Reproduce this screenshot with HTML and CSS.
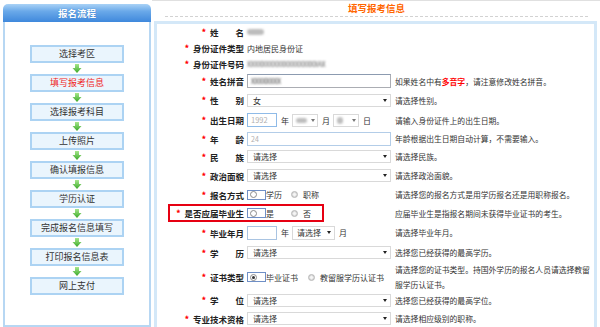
FILE: index.html
```html
<!DOCTYPE html>
<html lang="zh-CN">
<head>
<meta charset="utf-8">
<title>填写报考信息</title>
<link rel="stylesheet" href="styles.css">
</head>
<body>
<div class="page">
  <aside class="side">
    <div class="side-head">报名流程</div>
    <div class="side-body">
      <div class="step">选择考区</div>
      <svg class="arrow" viewBox="0 0 10 11"><defs><linearGradient id="g" x1="0" y1="0" x2="0" y2="1"><stop offset="0" stop-color="#a8e78c"/><stop offset="1" stop-color="#38a828"/></linearGradient></defs><path d="M3 1h4v4h2.5L5 10 0.5 5H3z" fill="url(#g)"/></svg>
      <div class="step cur">填写报考信息</div>
      <svg class="arrow" viewBox="0 0 10 11"><path d="M3 1h4v4h2.5L5 10 0.5 5H3z" fill="url(#g)"/></svg>
      <div class="step">选择报考科目</div>
      <svg class="arrow" viewBox="0 0 10 11"><path d="M3 1h4v4h2.5L5 10 0.5 5H3z" fill="url(#g)"/></svg>
      <div class="step">上传照片</div>
      <svg class="arrow" viewBox="0 0 10 11"><path d="M3 1h4v4h2.5L5 10 0.5 5H3z" fill="url(#g)"/></svg>
      <div class="step">确认填报信息</div>
      <svg class="arrow" viewBox="0 0 10 11"><path d="M3 1h4v4h2.5L5 10 0.5 5H3z" fill="url(#g)"/></svg>
      <div class="step">学历认证</div>
      <svg class="arrow" viewBox="0 0 10 11"><path d="M3 1h4v4h2.5L5 10 0.5 5H3z" fill="url(#g)"/></svg>
      <div class="step">完成报名信息填写</div>
      <svg class="arrow" viewBox="0 0 10 11"><path d="M3 1h4v4h2.5L5 10 0.5 5H3z" fill="url(#g)"/></svg>
      <div class="step">打印报名信息表</div>
      <svg class="arrow" viewBox="0 0 10 11"><path d="M3 1h4v4h2.5L5 10 0.5 5H3z" fill="url(#g)"/></svg>
      <div class="step">网上支付</div>
    </div>
  </aside>

  <main class="main">
    <h1 class="title">填写报考信息</h1>
    <div class="panel">
      <div class="row s16">
        <div class="lab"><b>*</b>姓　　名</div>
        <div class="val"><span class="blob"></span></div>
        <div class="hint"></div>
      </div>
      <div class="row s16">
        <div class="lab"><b>*</b>身份证件类型</div>
        <div class="val">内地居民身份证</div>
        <div class="hint"></div>
      </div>
      <div class="row s16">
        <div class="lab"><b>*</b>身份证件号码</div>
        <div class="val"><span class="masked">XXXXXXXXXXXXXXXXXXXAX</span></div>
        <div class="hint"></div>
      </div>
      <div class="row s18">
        <div class="lab"><b>*</b>姓名拼音</div>
        <div class="val"><span class="inp"><span class="masked dark">XXXXXXXX</span></span></div>
        <div class="hint">如果姓名中有<em>多音字</em>，请注意修改姓名拼音。</div>
      </div>
      <div class="row s20">
        <div class="lab"><b>*</b>性　　别</div>
        <div class="val"><span class="sel">女<i class="caret"></i></span></div>
        <div class="hint">请选择性别。</div>
      </div>
      <div class="row s20">
        <div class="lab"><b>*</b>出生日期</div>
        <div class="val">
          <span class="inp short focus">1992</span><span class="unit">年</span>
          <span class="sel mini"><span class="blob sm"></span><i class="caret"></i></span><span class="unit">月</span>
          <span class="sel mini"><span class="blob xs"></span><i class="caret"></i></span><span class="unit">日</span>
        </div>
        <div class="hint">请输入身份证件上的出生日期。</div>
      </div>
      <div class="row s17">
        <div class="lab"><b>*</b>年　　龄</div>
        <div class="val"><span class="inp off">24</span></div>
        <div class="hint">年龄根据出生日期自动计算，不需要输入。</div>
      </div>
      <div class="row">
        <div class="lab"><b>*</b>民　　族</div>
        <div class="val"><span class="sel">请选择<i class="caret"></i></span></div>
        <div class="hint">请选择民族。</div>
      </div>
      <div class="row">
        <div class="lab"><b>*</b>政治面貌</div>
        <div class="val"><span class="sel">请选择<i class="caret"></i></span></div>
        <div class="hint">请选择政治面貌。</div>
      </div>
      <div class="row">
        <div class="lab"><b>*</b>报名方式</div>
        <div class="val">
          <span class="opt"><span class="rbox"><span class="rad"></span></span>学历</span>
          <span class="rad dim"></span><span class="olab">职称</span>
        </div>
        <div class="hint">请选择您的报名方式是用学历报名还是用职称报名。</div>
      </div>
      <div class="row s18 flag">
        <div class="lab"><b>*</b>是否应届毕业生</div>
        <div class="val">
          <span class="opt"><span class="rbox"><span class="rad"></span></span>是</span>
          <span class="rad dim"></span><span class="olab">否</span>
        </div>
        <div class="hint">应届毕业生是指报名期间未获得毕业证书的考生。</div>
      </div>
      <div class="row s21">
        <div class="lab"><b>*</b>毕业年月</div>
        <div class="val">
          <span class="inp short plain"></span><span class="unit">年</span>
          <span class="sel small">请选择<i class="caret"></i></span><span class="unit">月</span>
        </div>
        <div class="hint">请选择毕业年月。</div>
      </div>
      <div class="row">
        <div class="lab"><b>*</b>学　　历</div>
        <div class="val"><span class="sel">请选择<i class="caret"></i></span></div>
        <div class="hint">选择您已经获得的最高学历。</div>
      </div>
      <div class="row s29">
        <div class="lab"><b>*</b>证书类型</div>
        <div class="val">
          <span class="opt wide"><span class="rbox"><span class="rad on"></span></span>毕业证书</span>
          <span class="rad dim"></span><span class="olab">教留服学历认证书</span>
        </div>
        <div class="hint">请选择您的证书类型。持国外学历的报名人员请选择教留服学历认证书。</div>
      </div>
      <div class="row s18">
        <div class="lab"><b>*</b>学　　位</div>
        <div class="val"><span class="sel">请选择<i class="caret"></i></span></div>
        <div class="hint">选择您已经获得的最高学位。</div>
      </div>
      <div class="row">
        <div class="lab"><b>*</b>专业技术资格</div>
        <div class="val"><span class="sel">请选择<i class="caret"></i></span></div>
        <div class="hint">请选择相应级别的职称。</div>
      </div>
    </div>
  </main>
</div>
</body>
</html>
```

FILE: styles.css
```css
html, body {
  margin: 0;
  padding: 0;
}
body {
  width: 600px;
  height: 327px;
  overflow: hidden;
  background: #fff;
  color: #333;
  font-family: "Noto Sans CJK SC", "Noto Sans", sans-serif;
}
.page {
  display: flex;
  height: 327px;
}

/* ---------- sidebar ---------- */
.side {
  width: 152px;
  flex: none;
  box-sizing: border-box;
  padding: 4px 1px 0 3px;
  display: flex;
  flex-direction: column;
}
.side-head {
  height: 18px;
  border-radius: 5px 5px 0 0;
  background: linear-gradient(#a9d2f6 0%, #6aa9e9 40%, #3f88dc 100%);
  color: #fff;
  font-weight: bold;
  font-size: 9.5px;
  line-height: 18px;
  text-align: center;
  text-shadow: 0 0 1px #2a6bb8;
}
.side-body {
  flex: 1;
  border: 2px solid #b7d7f3;
  border-top: 0;
  display: flex;
  flex-direction: column;
  align-items: center;
  padding-top: 23px;
}
.step {
  width: 94px;
  height: 18px;
  box-sizing: border-box;
  border: 2px solid #acd3f3;
  background: #eaf5fd;
  font-size: 9px;
  line-height: 14px;
  text-align: center;
  color: #333;
  white-space: nowrap;
}
.step.cur {
  color: #f02626;
}
.arrow {
  display: block;
  width: 10px;
  height: 11px;
}

/* ---------- main ---------- */
.main {
  flex: 1;
  min-width: 0;
  border-top: 1px solid #e0e0e0;
  padding: 0 3px 0 2px;
  display: flex;
  flex-direction: column;
}
.title {
  margin: 0 9px 4px 11px;
  height: 15px;
  line-height: 15px;
  font-size: 9.5px;
  font-weight: bold;
  color: #f60;
  text-align: center;
  border-bottom: 1px dashed #d2d2d2;
}
.panel {
  flex: 1;
  border: 3px solid #d4e8f8;
  border-bottom: 0;
}

.row {
  display: grid;
  grid-template-columns: 90px 148px 1fr;
  align-items: center;
  height: 19px;
}
.row.s16 { height: 16px; }
.row.s17 { height: 17px; }
.row.s18 { height: 18px; }
.row.s20 { height: 20px; }
.row.s21 { height: 21px; }
.row.s29 { height: 29px; }
.row.flag { position: relative; }
.row.flag::after {
  content: "";
  position: absolute;
  left: 11px;
  top: 0;
  width: 156px;
  height: 18px;
  box-sizing: border-box;
  border: 2px solid #e60012;
}

.lab {
  text-align: right;
  padding-right: 3px;
  font-size: 8.5px;
  font-weight: bold;
  color: #222;
  white-space: nowrap;
}
.lab b {
  color: #f00;
  font-size: 8px;
  margin-right: 4px;
  position: relative;
  top: -1px;
}
.val {
  display: flex;
  align-items: center;
  font-size: 8px;
  color: #333;
  white-space: nowrap;
}
.hint {
  font-size: 7.8px;
  line-height: 15px;
  color: #333;
}
.hint em {
  font-style: normal;
  font-weight: bold;
  color: #f00;
}

/* controls */
.inp {
  box-sizing: border-box;
  width: 144px;
  height: 14px;
  border: 1px solid #abadb3;
  border-top-color: #8c9bb0;
  background: #fff;
  padding-left: 3px;
  font-size: 8px;
  line-height: 12px;
  display: flex;
  align-items: center;
}
.inp.short {
  width: 30px;
  color: #b0b0b0;
  font-size: 7.5px;
}
.inp.focus {
  border-color: #8fbbe8;
}
.inp.plain {
  border-color: #a9c4e2;
}
.inp.off {
  border-color: #b3cde8;
  color: #b0b0b0;
  font-size: 7px;
  align-items: flex-start;
}
.sel {
  box-sizing: border-box;
  width: 144px;
  height: 13px;
  border: 1px solid #d9d9d9;
  background: #fff;
  padding-left: 5px;
  font-size: 8px;
  display: flex;
  align-items: center;
  justify-content: space-between;
}
.sel.mini {
  width: 26px;
  padding-left: 3px;
}
.sel.small {
  width: 43px;
  height: 14px;
  padding-left: 4px;
}
.caret {
  width: 0;
  height: 0;
  border-left: 2.5px solid transparent;
  border-right: 2.5px solid transparent;
  border-top: 3px solid #222;
  margin-right: 3px;
}
.sel.mini .caret {
  border-top-color: #777;
  margin-right: 2px;
}
.unit {
  margin: 0 3px 0 4px;
}

.blob {
  display: inline-block;
  width: 17px;
  height: 6px;
  border-radius: 3px;
  background: #bdbdbd;
  filter: blur(1px);
}
.blob.sm { width: 11px; height: 5px; }
.blob.xs { width: 6px; height: 7px; }
.masked {
  font-size: 7px;
  letter-spacing: -0.3px;
  color: #555;
  filter: blur(0.8px);
}
.masked.dark {
  color: #333;
  font-size: 7px;
  filter: blur(0.9px);
}

/* radios */
.opt {
  display: inline-flex;
  align-items: center;
  min-width: 44px;
}
.opt.wide {
  margin-right: 10px;
}
.rbox {
  box-sizing: border-box;
  width: 19px;
  height: 10px;
  border: 1px solid #6f8fc6;
  display: flex;
  align-items: center;
  padding-left: 2px;
}
.rad {
  box-sizing: border-box;
  width: 7px;
  height: 7px;
  border-radius: 50%;
  border: 1px solid #8a8a8a;
  background: #fff;
  display: flex;
  align-items: center;
  justify-content: center;
  flex: none;
}
.rad.on::after {
  content: "";
  width: 3px;
  height: 3px;
  border-radius: 50%;
  background: #333;
}
.rad.dim {
  border-color: #b8b8b8;
  background: radial-gradient(circle, #f6f6f6 25%, #cfcfcf 75%);
}
.olab {
  margin-left: 5px;
}
```
